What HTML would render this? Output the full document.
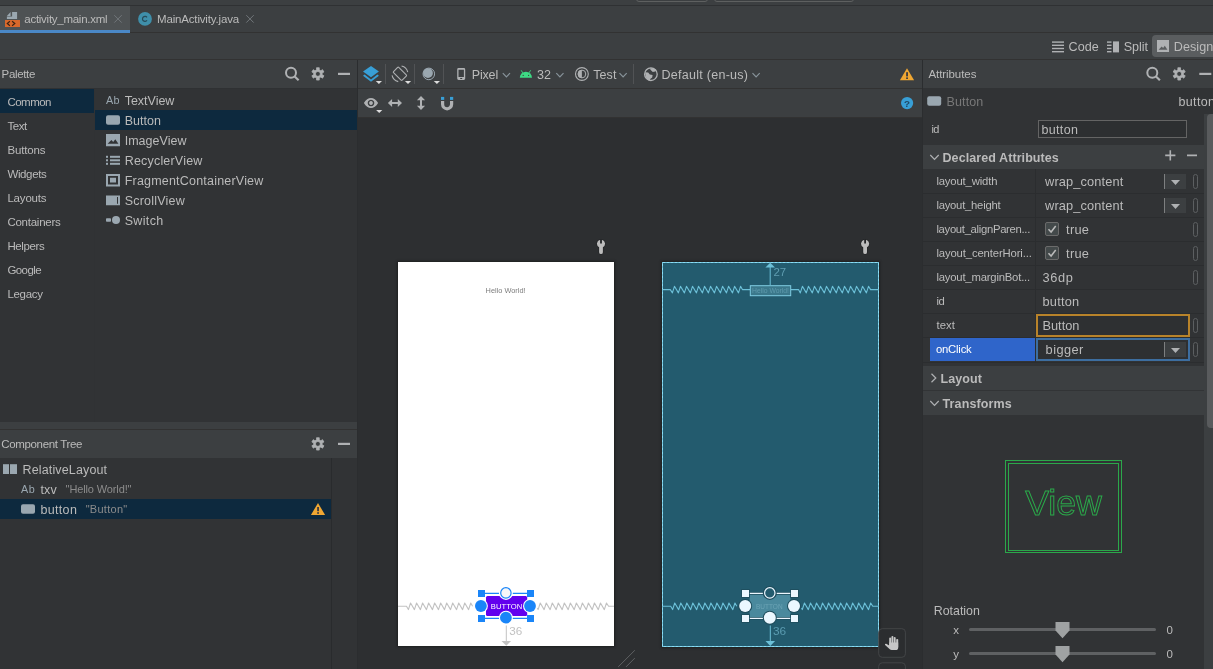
<!DOCTYPE html>
<html>
<head>
<meta charset="utf-8">
<title>Android Studio</title>
<style>
*{box-sizing:border-box;margin:0;padding:0}
html,body{width:1213px;height:669px;overflow:hidden;background:#3c3f41}
body{font-family:"Liberation Sans",sans-serif;font-size:12px;color:#bbbbbb;position:relative}
#root{position:absolute;left:0;top:0;width:1213px;height:669px;will-change:transform}
.a{position:absolute}
.t{position:absolute;white-space:nowrap;line-height:20px;height:20px}
svg{position:absolute;overflow:visible}
</style>
</head>
<body>
<div id="root">
<div class="a" style="left:0px;top:5px;width:1213px;height:1px;background:#2f3133;"></div>
<div class="a" style="left:636px;top:-6px;width:72px;height:8px;background:transparent;border:1px solid #5e6060;border-radius:3px"></div>
<div class="a" style="left:714px;top:-6px;width:140px;height:8px;background:transparent;border:1px solid #5e6060;border-radius:3px"></div>
<div class="a" style="left:0px;top:6px;width:130px;height:26px;background:#4e5254;"></div>
<div class="a" style="left:0px;top:30px;width:130px;height:3px;background:#4a88c7;"></div>
<div class="a" style="left:130px;top:32px;width:1083px;height:1px;background:#323232;"></div>
<div class="t" style="left:24.30px;top:9.00px;font-size:11.5px;color:#bbbbbb;letter-spacing:-0.268px;">activity_main.xml</div>
<div class="t" style="left:157.00px;top:9.00px;font-size:11.5px;color:#bbbbbb;letter-spacing:-0.164px;">MainActivity.java</div>
<div class="a" style="left:0px;top:59px;width:1213px;height:1px;background:#323232;"></div>
<div class="a" style="left:1152px;top:35px;width:70px;height:22px;background:#5a5d5f;border-radius:4px"></div>
<div class="t" style="left:1068.50px;top:37.00px;font-size:12.6px;color:#bbbbbb;letter-spacing:0.069px;">Code</div>
<div class="t" style="left:1123.70px;top:37.00px;font-size:12.6px;color:#bbbbbb;letter-spacing:-0.042px;">Split</div>
<div class="t" style="left:1173.80px;top:37.00px;font-size:12.6px;color:#bbbbbb;letter-spacing:0.046px;">Design</div>
<div class="a" style="left:0px;top:88px;width:357px;height:334px;background:#313335;"></div>
<div class="a" style="left:0px;top:88px;width:357px;height:1px;background:#2f3133;"></div>
<div class="t" style="left:1.60px;top:64.00px;font-size:11.5px;color:#bbbbbb;letter-spacing:-0.343px;">Palette</div>
<div class="a" style="left:0px;top:89px;width:94px;height:24px;background:#0d293e;"></div>
<div class="t" style="left:7.40px;top:92.00px;font-size:11.5px;color:#bbbbbb;letter-spacing:-0.509px;">Common</div>
<div class="t" style="left:7.40px;top:116.00px;font-size:11.5px;color:#bbbbbb;letter-spacing:-0.398px;">Text</div>
<div class="t" style="left:7.40px;top:140.00px;font-size:11.5px;color:#bbbbbb;letter-spacing:-0.157px;">Buttons</div>
<div class="t" style="left:7.40px;top:164.00px;font-size:11.5px;color:#bbbbbb;letter-spacing:-0.363px;">Widgets</div>
<div class="t" style="left:7.40px;top:188.00px;font-size:11.5px;color:#bbbbbb;letter-spacing:-0.183px;">Layouts</div>
<div class="t" style="left:7.40px;top:212.00px;font-size:11.5px;color:#bbbbbb;letter-spacing:-0.251px;">Containers</div>
<div class="t" style="left:7.40px;top:236.00px;font-size:11.5px;color:#bbbbbb;letter-spacing:-0.375px;">Helpers</div>
<div class="t" style="left:7.40px;top:260.00px;font-size:11.5px;color:#bbbbbb;letter-spacing:-0.581px;">Google</div>
<div class="t" style="left:7.40px;top:284.00px;font-size:11.5px;color:#bbbbbb;letter-spacing:-0.314px;">Legacy</div>
<div class="a" style="left:94px;top:89px;width:1px;height:333px;background:#303234;"></div>
<div class="a" style="left:95px;top:110px;width:262px;height:20px;background:#0d293e;"></div>
<div class="t" style="left:124.70px;top:91.00px;font-size:12.5px;color:#bbbbbb;letter-spacing:-0.012px;">TextView</div>
<div class="t" style="left:124.70px;top:111.00px;font-size:12.5px;color:#bbbbbb;letter-spacing:0.027px;">Button</div>
<div class="t" style="left:124.70px;top:131.00px;font-size:12.5px;color:#bbbbbb;letter-spacing:0.021px;">ImageView</div>
<div class="t" style="left:124.70px;top:151.00px;font-size:12.5px;color:#bbbbbb;letter-spacing:0.193px;">RecyclerView</div>
<div class="t" style="left:124.70px;top:171.00px;font-size:12.5px;color:#bbbbbb;letter-spacing:0.202px;">FragmentContainerView</div>
<div class="t" style="left:124.70px;top:191.00px;font-size:12.5px;color:#bbbbbb;letter-spacing:0.218px;">ScrollView</div>
<div class="t" style="left:124.70px;top:211.00px;font-size:12.5px;color:#bbbbbb;letter-spacing:0.347px;">Switch</div>
<div class="a" style="left:0px;top:429px;width:357px;height:1px;background:#323232;"></div>
<div class="a" style="left:0px;top:458px;width:357px;height:211px;background:#313335;"></div>
<div class="t" style="left:1.30px;top:434.00px;font-size:11.5px;color:#bbbbbb;letter-spacing:-0.354px;">Component Tree</div>
<div class="a" style="left:0px;top:499px;width:331px;height:20px;background:#0d293e;"></div>
<div class="a" style="left:331px;top:458px;width:1px;height:211px;background:#292b2d;"></div>
<div class="t" style="left:22.60px;top:460.00px;font-size:12.5px;color:#bbbbbb;letter-spacing:0.136px;">RelativeLayout</div>
<div class="t" style="left:40.40px;top:480.00px;font-size:12.5px;color:#bbbbbb;letter-spacing:0.176px;">txv</div>
<div class="t" style="left:65.60px;top:479.00px;font-size:11px;color:#8c8c8c;letter-spacing:-0.123px;">&quot;Hello World!&quot;</div>
<div class="t" style="left:40.40px;top:500.00px;font-size:12.5px;color:#bbbbbb;letter-spacing:0.341px;">button</div>
<div class="t" style="left:85.70px;top:499.00px;font-size:11px;color:#8c8c8c;letter-spacing:0.273px;">&quot;Button&quot;</div>
<div class="a" style="left:358px;top:88px;width:564px;height:1px;background:#323232;"></div>
<div class="a" style="left:358px;top:117px;width:564px;height:1px;background:#323232;"></div>
<div class="t" style="left:471.80px;top:65.00px;font-size:12.5px;color:#bbbbbb;letter-spacing:-0.179px;">Pixel</div>
<div class="t" style="left:537.00px;top:65.00px;font-size:12.5px;color:#bbbbbb;letter-spacing:0.048px;">32</div>
<div class="t" style="left:593.30px;top:65.00px;font-size:12.5px;color:#bbbbbb;letter-spacing:0.044px;">Test</div>
<div class="t" style="left:661.50px;top:65.00px;font-size:12.5px;color:#bbbbbb;letter-spacing:0.275px;">Default (en-us)</div>
<div class="a" style="left:385px;top:64px;width:1px;height:20px;background:#515355;"></div>
<div class="a" style="left:414px;top:64px;width:1px;height:20px;background:#515355;"></div>
<div class="a" style="left:443px;top:64px;width:1px;height:20px;background:#515355;"></div>
<div class="a" style="left:633px;top:64px;width:1px;height:20px;background:#515355;"></div>
<div class="a" style="left:358px;top:118px;width:564px;height:551px;background:#2d2f31;"></div>
<div class="a" style="left:398px;top:262px;width:216px;height:384px;background:#ffffff;box-shadow:0 0 2px 1px #1e1f20"></div>
<div class="a" style="left:662px;top:262px;width:217px;height:385px;background:#235b6e;box-shadow:0 0 2px 1px #1e1f20"></div>
<div class="a" style="left:923px;top:88px;width:281px;height:581px;background:#313335;"></div>
<div class="a" style="left:1204px;top:88px;width:9px;height:26px;background:#313335;"></div>
<div class="t" style="left:928.50px;top:64.00px;font-size:11.5px;color:#bbbbbb;letter-spacing:-0.078px;">Attributes</div>
<div class="t" style="left:946.60px;top:92.00px;font-size:12.5px;color:#787878;letter-spacing:0.093px;">Button</div>
<div class="t" style="left:1178.50px;top:92.00px;font-size:12.5px;color:#bbbbbb;letter-spacing:0.358px;">button</div>
<div class="t" style="left:931.40px;top:119.00px;font-size:11px;color:#bbbbbb;letter-spacing:-0.481px;">id</div>
<div class="a" style="left:1038px;top:120px;width:149px;height:18px;background:#2d2f31;border:1px solid #646464"></div>
<div class="t" style="left:1041.50px;top:120.00px;font-size:12.5px;color:#bbbbbb;letter-spacing:0.324px;">button</div>
<div class="a" style="left:923px;top:145px;width:281px;height:24px;background:#3c3f41;"></div>
<div class="t" style="left:942.50px;top:148.00px;font-size:12.5px;color:#bbbbbb;letter-spacing:0.082px;font-weight:bold;">Declared Attributes</div>
<div class="a" style="left:923px;top:193px;width:281px;height:1px;background:#2b2d2f;"></div>
<div class="t" style="left:936.40px;top:171.00px;font-size:11.3px;color:#bbbbbb;letter-spacing:-0.160px;">layout_width</div>
<div class="a" style="left:923px;top:217px;width:281px;height:1px;background:#2b2d2f;"></div>
<div class="t" style="left:936.40px;top:195.00px;font-size:11.3px;color:#bbbbbb;letter-spacing:-0.248px;">layout_height</div>
<div class="a" style="left:923px;top:241px;width:281px;height:1px;background:#2b2d2f;"></div>
<div class="t" style="left:936.40px;top:219.00px;font-size:11.3px;color:#bbbbbb;letter-spacing:-0.314px;">layout_alignParen...</div>
<div class="a" style="left:923px;top:265px;width:281px;height:1px;background:#2b2d2f;"></div>
<div class="t" style="left:936.40px;top:243.00px;font-size:11.3px;color:#bbbbbb;letter-spacing:-0.129px;">layout_centerHori...</div>
<div class="a" style="left:923px;top:289px;width:281px;height:1px;background:#2b2d2f;"></div>
<div class="t" style="left:936.40px;top:267.00px;font-size:11.3px;color:#bbbbbb;letter-spacing:-0.198px;">layout_marginBot...</div>
<div class="a" style="left:923px;top:313px;width:281px;height:1px;background:#2b2d2f;"></div>
<div class="t" style="left:936.40px;top:291.00px;font-size:11.3px;color:#bbbbbb;letter-spacing:-0.498px;">id</div>
<div class="a" style="left:923px;top:337px;width:281px;height:1px;background:#2b2d2f;"></div>
<div class="t" style="left:936.40px;top:315.00px;font-size:11.3px;color:#bbbbbb;letter-spacing:0.097px;">text</div>
<div class="a" style="left:1035px;top:169px;width:1px;height:193px;background:#2b2d2f;"></div>
<div class="a" style="left:930px;top:338px;width:105px;height:23px;background:#2f65ca;"></div>
<div class="t" style="left:936.00px;top:339.00px;font-size:11.3px;color:#ffffff;letter-spacing:-0.222px;">onClick</div>
<div class="a" style="left:923px;top:362px;width:281px;height:1px;background:#2b2d2f;"></div>
<div class="t" style="left:1045.10px;top:172.00px;font-size:12.8px;color:#bbbbbb;letter-spacing:0.121px;">wrap_content</div>
<div class="t" style="left:1045.10px;top:196.00px;font-size:12.8px;color:#bbbbbb;letter-spacing:0.121px;">wrap_content</div>
<div class="t" style="left:1066.10px;top:220.00px;font-size:12.8px;color:#bbbbbb;letter-spacing:0.236px;">true</div>
<div class="t" style="left:1066.10px;top:244.00px;font-size:12.8px;color:#bbbbbb;letter-spacing:0.236px;">true</div>
<div class="t" style="left:1042.50px;top:268.00px;font-size:12.8px;color:#bbbbbb;letter-spacing:0.606px;">36dp</div>
<div class="t" style="left:1042.50px;top:292.00px;font-size:12.8px;color:#bbbbbb;letter-spacing:0.219px;">button</div>
<div class="a" style="left:1036px;top:314px;width:154px;height:23px;background:#2e3032;border:2px solid #b8832a"></div>
<div class="t" style="left:1042.50px;top:316.00px;font-size:12.8px;color:#bbbbbb;letter-spacing:-0.018px;">Button</div>
<div class="a" style="left:1036px;top:338px;width:154px;height:23px;background:#2e3032;border:2px solid #3d6ea0"></div>
<div class="t" style="left:1045.60px;top:340.00px;font-size:12.8px;color:#bbbbbb;letter-spacing:0.436px;">bigger</div>
<div class="a" style="left:1164px;top:174px;width:22px;height:15px;background:#3c3f41;"></div>
<div class="a" style="left:1164px;top:174px;width:1px;height:15px;background:#7d7f80;"></div>
<svg style="left:1171px;top:180px" width="9" height="5" viewBox="0 0 9 5"><path d="M0 0h9l-4.5 5z" fill="#afb1b3"/></svg>
<div class="a" style="left:1164px;top:198px;width:22px;height:15px;background:#3c3f41;"></div>
<div class="a" style="left:1164px;top:198px;width:1px;height:15px;background:#7d7f80;"></div>
<svg style="left:1171px;top:204px" width="9" height="5" viewBox="0 0 9 5"><path d="M0 0h9l-4.5 5z" fill="#afb1b3"/></svg>
<div class="a" style="left:1164px;top:342px;width:22px;height:15px;background:#3c3f41;"></div>
<div class="a" style="left:1164px;top:342px;width:1px;height:15px;background:#7d7f80;"></div>
<svg style="left:1171px;top:348px" width="9" height="5" viewBox="0 0 9 5"><path d="M0 0h9l-4.5 5z" fill="#afb1b3"/></svg>
<div class="a" style="left:1193px;top:174px;width:5px;height:15px;background:transparent;border:1px solid #5c5f61;border-radius:2.5px"></div>
<div class="a" style="left:1193px;top:198px;width:5px;height:15px;background:transparent;border:1px solid #5c5f61;border-radius:2.5px"></div>
<div class="a" style="left:1193px;top:222px;width:5px;height:15px;background:transparent;border:1px solid #5c5f61;border-radius:2.5px"></div>
<div class="a" style="left:1193px;top:246px;width:5px;height:15px;background:transparent;border:1px solid #5c5f61;border-radius:2.5px"></div>
<div class="a" style="left:1193px;top:270px;width:5px;height:15px;background:transparent;border:1px solid #5c5f61;border-radius:2.5px"></div>
<div class="a" style="left:1193px;top:318px;width:5px;height:15px;background:transparent;border:1px solid #5c5f61;border-radius:2.5px"></div>
<div class="a" style="left:1193px;top:342px;width:5px;height:15px;background:transparent;border:1px solid #5c5f61;border-radius:2.5px"></div>
<div class="a" style="left:1045px;top:222px;width:14px;height:14px;background:#43494a;border:1px solid #6b6b6b;border-radius:2px"></div>
<svg style="left:1045px;top:222px" width="14" height="14" viewBox="0 0 14 14"><path d="M3.5 7.2l2.6 2.8l4.6-6" fill="none" stroke="#bbbbbb" stroke-width="1.5"/></svg>
<div class="a" style="left:1045px;top:246px;width:14px;height:14px;background:#43494a;border:1px solid #6b6b6b;border-radius:2px"></div>
<svg style="left:1045px;top:246px" width="14" height="14" viewBox="0 0 14 14"><path d="M3.5 7.2l2.6 2.8l4.6-6" fill="none" stroke="#bbbbbb" stroke-width="1.5"/></svg>
<div class="a" style="left:923px;top:366px;width:281px;height:24px;background:#3c3f41;"></div>
<div class="a" style="left:923px;top:390px;width:281px;height:1px;background:#323436;"></div>
<div class="a" style="left:923px;top:391px;width:281px;height:24px;background:#3c3f41;"></div>
<div class="t" style="left:940.50px;top:369.00px;font-size:12.5px;color:#bbbbbb;letter-spacing:0.104px;font-weight:bold;">Layout</div>
<div class="t" style="left:942.50px;top:394.00px;font-size:12.5px;color:#bbbbbb;letter-spacing:0.122px;font-weight:bold;">Transforms</div>
<div class="a" style="left:1206.5px;top:114px;width:8px;height:314px;background:#595b5d;border-radius:4px 0 0 4px"></div>
<div class="a" style="left:1005px;top:460px;width:117px;height:93px;background:transparent;border:1px solid #2ba84a"></div>
<div class="a" style="left:1008px;top:462.5px;width:111px;height:88px;background:transparent;border:1px solid #2ba84a"></div>
<svg style="left:1005px;top:460px" width="117" height="93" viewBox="0 0 117 93"><text x="20.2" y="55" font-family="Liberation Sans, sans-serif" font-size="35.7" fill="none" stroke="#2ba84a" stroke-width="1">View</text></svg>
<div class="t" style="left:933.80px;top:601.00px;font-size:12.4px;color:#bbbbbb;letter-spacing:-0.011px;">Rotation</div>
<div class="t" style="left:953.30px;top:620.00px;font-size:11.5px;color:#bbbbbb;letter-spacing:0.000px;">x</div>
<div class="t" style="left:1166.40px;top:620.00px;font-size:11.5px;color:#bbbbbb;letter-spacing:0.000px;">0</div>
<div class="a" style="left:969px;top:628.2px;width:187.2px;height:3px;background:#5f6163;border-radius:1.5px"></div>
<svg style="left:1055.3px;top:622.1px" width="15" height="17" viewBox="0 0 15 17"><path d="M0.5 0h14v8.5l-7 7.7l-7-7.7z" fill="#9fa2a3"/></svg>
<div class="t" style="left:953.30px;top:644.00px;font-size:11.5px;color:#bbbbbb;letter-spacing:0.000px;">y</div>
<div class="t" style="left:1166.40px;top:644.00px;font-size:11.5px;color:#bbbbbb;letter-spacing:0.000px;">0</div>
<div class="a" style="left:969px;top:652.2px;width:187.2px;height:3px;background:#5f6163;border-radius:1.5px"></div>
<svg style="left:1055.3px;top:646.1px" width="15" height="17" viewBox="0 0 15 17"><path d="M0.5 0h14v8.5l-7 7.7l-7-7.7z" fill="#9fa2a3"/></svg>
<div class="a" style="left:357px;top:60px;width:1px;height:609px;background:#2b2d2f;"></div>
<div class="a" style="left:922px;top:60px;width:1px;height:609px;background:#2b2d2f;"></div>
<svg style="left:0;top:0" width="1213" height="669" viewBox="0 0 1213 669"><rect x="5" y="20" width="15" height="7" fill="#d9682b"/><path d="M9.9 21.3L7.3 23.5L9.9 25.7M12.1 21.3L14.8 23.5L12.1 25.7" fill="none" stroke="#3a2213" stroke-width="1.2"/><path d="M12.1 11.9h5v7h-10.2v-2.3h5.2z M6.9 15.9L10.6 11.9V15.9z" fill="#9aa7b0"/><path d="M114.3 15.2l7.4 7.4M121.7 15.2l-7.4 7.4" stroke="#71767a" stroke-width="1" fill="none"/><path d="M246.3 15.2l7.4 7.4M253.7 15.2l-7.4 7.4" stroke="#71767a" stroke-width="1" fill="none"/><circle cx="145" cy="18.9" r="6.9" fill="#3f8faa"/><path d="M147 17.4A2.5 2.5 0 1 0 147 20.400" fill="none" stroke="#274a58" stroke-width="1.200"/><rect x="1052" y="41.4" width="12" height="1.4" fill="#afb1b3"/><rect x="1107" y="41.4" width="4.5" height="1.4" fill="#afb1b3"/><rect x="1052" y="44.6" width="12" height="1.4" fill="#afb1b3"/><rect x="1107" y="44.6" width="4.5" height="1.4" fill="#afb1b3"/><rect x="1052" y="47.8" width="12" height="1.4" fill="#afb1b3"/><rect x="1107" y="47.8" width="4.5" height="1.4" fill="#afb1b3"/><rect x="1052" y="51.0" width="12" height="1.4" fill="#afb1b3"/><rect x="1107" y="51.0" width="4.5" height="1.4" fill="#afb1b3"/><rect x="1113" y="41.4" width="6" height="11" fill="#afb1b3"/><path d="M1157 40h12v12h-12z M1158.6 49.8h8.8l-2.6-4l-1.7 2.3l-1.4-1.6z" fill="#afb1b3" fill-rule="evenodd"/><circle cx="291" cy="72.8" r="5" fill="none" stroke="#afb1b3" stroke-width="2"/><path d="M294.4 76.3L298.6 80.3" stroke="#afb1b3" stroke-width="2.2" fill="none"/><path d="M316.64 69.79 L316.53 67.75 L319.27 67.75 L319.16 69.79 L320.83 70.75 L322.54 69.64 L323.91 72.02 L322.09 72.93 L322.09 74.87 L323.91 75.78 L322.54 78.16 L320.83 77.05 L319.16 78.01 L319.27 80.05 L316.53 80.05 L316.64 78.01 L314.97 77.05 L313.26 78.16 L311.89 75.78 L313.71 74.87 L313.71 72.93 L311.89 72.02 L313.26 69.64 L314.97 70.75Z M315.45 73.90a2.45 2.45 0 1 0 4.9 0a2.45 2.45 0 1 0 -4.9 0Z" fill="#afb1b3" fill-rule="evenodd" stroke="#afb1b3" stroke-width="0.8" stroke-linejoin="round"/><rect x="338" y="72.8" width="12" height="2.2" fill="#afb1b3"/><circle cx="1152.3" cy="72.8" r="5" fill="none" stroke="#afb1b3" stroke-width="2"/><path d="M1155.6999999999998 76.3L1159.9 80.3" stroke="#afb1b3" stroke-width="2.2" fill="none"/><path d="M1177.94 69.79 L1177.83 67.75 L1180.57 67.75 L1180.46 69.79 L1182.13 70.75 L1183.84 69.64 L1185.21 72.02 L1183.39 72.93 L1183.39 74.87 L1185.21 75.78 L1183.84 78.16 L1182.13 77.05 L1180.46 78.01 L1180.57 80.05 L1177.83 80.05 L1177.94 78.01 L1176.27 77.05 L1174.56 78.16 L1173.19 75.78 L1175.01 74.87 L1175.01 72.93 L1173.19 72.02 L1174.56 69.64 L1176.27 70.75Z M1176.75 73.90a2.45 2.45 0 1 0 4.9 0a2.45 2.45 0 1 0 -4.9 0Z" fill="#afb1b3" fill-rule="evenodd" stroke="#afb1b3" stroke-width="0.8" stroke-linejoin="round"/><rect x="1199.3" y="72.8" width="12" height="2.2" fill="#afb1b3"/><path d="M316.64 439.79 L316.53 437.75 L319.27 437.75 L319.16 439.79 L320.83 440.75 L322.54 439.64 L323.91 442.02 L322.09 442.93 L322.09 444.87 L323.91 445.78 L322.54 448.16 L320.83 447.05 L319.16 448.01 L319.27 450.05 L316.53 450.05 L316.64 448.01 L314.97 447.05 L313.26 448.16 L311.89 445.78 L313.71 444.87 L313.71 442.93 L311.89 442.02 L313.26 439.64 L314.97 440.75Z M315.45 443.90a2.45 2.45 0 1 0 4.9 0a2.45 2.45 0 1 0 -4.9 0Z" fill="#afb1b3" fill-rule="evenodd" stroke="#afb1b3" stroke-width="0.8" stroke-linejoin="round"/><rect x="338" y="442.8" width="12" height="2.2" fill="#afb1b3"/><rect x="106" y="115.2" width="14" height="9.6" rx="2" fill="#9aa7b0"/><path d="M106 134h14v12.2h-14z M107.6 143.8h10.8l-3.1-4.6l-2.1 2.7l-1.8-1.9z" fill="#9aa7b0" fill-rule="evenodd"/><rect x="106" y="155.8" width="2" height="2" fill="#9aa7b0"/><rect x="110" y="155.8" width="10" height="2" fill="#9aa7b0"/><rect x="106" y="159.3" width="2" height="2" fill="#9aa7b0"/><rect x="110" y="159.3" width="10" height="2" fill="#9aa7b0"/><rect x="106" y="162.8" width="2" height="2" fill="#9aa7b0"/><rect x="110" y="162.8" width="10" height="2" fill="#9aa7b0"/><path d="M106 174h14v12.4h-14z M108 176h10v8.4h-10z M110 177.8h6v4.8h-6z" fill="#9aa7b0" fill-rule="evenodd"/><path d="M106 195.5h14v9.8h-14z M117 197h1v6.8h-1z" fill="#9aa7b0" fill-rule="evenodd"/><rect x="106" y="218.2" width="5" height="3.6" rx="0.8" fill="#9aa7b0"/><circle cx="116" cy="220" r="4" fill="#9aa7b0"/><rect x="3" y="464.2" width="6" height="9.8" fill="#9aa7b0"/><rect x="10" y="464.2" width="7" height="9.8" fill="#9aa7b0"/><rect x="21" y="504.2" width="14" height="9.6" rx="2" fill="#9aa7b0"/><path d="M318 503L325.1 515H310.9z" fill="#f0a732"/><rect x="317.2" y="507" width="1.7" height="4.2" fill="#2d3240"/><rect x="317.2" y="512.2" width="1.7" height="1.6" fill="#2d3240"/><path d="M907 68.2L914.1 80.2H899.9z" fill="#f0a732"/><rect x="906.2" y="72.2" width="1.7" height="4.2" fill="#2d3240"/><rect x="906.2" y="77.4" width="1.7" height="1.6" fill="#2d3240"/><circle cx="907.1" cy="103.1" r="6.1" fill="#389fd6"/><text x="907.1" y="106.6" font-family="Liberation Sans, sans-serif" font-weight="bold" font-size="9.8" text-anchor="middle" fill="#1f4a66">?</text><rect x="927.2" y="96.2" width="14" height="9.6" rx="2" fill="#9aa7b0"/><path d="M930.3 155l4.2 4.4l4.2-4.4" fill="none" stroke="#afb1b3" stroke-width="1.2"/><path d="M930.3 401l4.2 4.4l4.2-4.4" fill="none" stroke="#afb1b3" stroke-width="1.2"/><path d="M931.5 373.8l4.3 4.2l-4.3 4.2" fill="none" stroke="#afb1b3" stroke-width="1.2"/><path d="M1165.2 155.4h10.2M1170.3 150.3v10.2M1187 155.4h10" stroke="#afb1b3" stroke-width="1.6" fill="none"/></svg>
<div class="t" style="left:105.90px;top:90.00px;font-size:10.8px;color:#9aa7b0;letter-spacing:0.495px;">Ab</div>
<div class="t" style="left:21.00px;top:479.00px;font-size:10.8px;color:#9aa7b0;letter-spacing:0.495px;">Ab</div>
<svg style="left:0;top:0" width="1213" height="669" viewBox="0 0 1213 669"><path d="M371 65.9L378.9 71.6L371 77.2L363 71.6z" fill="#389fd6"/><path d="M363 75.7L364.6 74.6L371 79.4L377.4 74.6L378.9 75.7L371 81.7z" fill="#389fd6"/><path d="M375.8 81.1h6.2l-3.1 3z" fill="#dcdcdc"/><path d="M404.9 81.1h6.2l-3.1 3z" fill="#dcdcdc"/><path d="M433.8 81.1h6.2l-3.1 3z" fill="#dcdcdc"/><path d="M376.1 109.9h6.2l-3.1 3z" fill="#dcdcdc"/><g transform="translate(399.9 73.8) rotate(45)"><rect x="-6.1" y="-3.7" width="12.2" height="7.4" rx="0.8" fill="none" stroke="#afb1b3" stroke-width="1.1"/></g><path d="M401.56 65.97A8.0 8.0 0 0 1 407.73 72.14" fill="none" stroke="#afb1b3" stroke-width="1.1"/><path d="M398.24 81.63A8.0 8.0 0 0 1 392.07 75.46" fill="none" stroke="#afb1b3" stroke-width="1.1"/><circle cx="428.8" cy="73.9" r="5.8" fill="none" stroke="#9aa7b0" stroke-width="1"/><circle cx="427.950" cy="73.050" r="4.900" fill="#9aa7b0"/><path d="M458.6 68h5.2a1.4 1.4 0 0 1 1.4 1.4v9.2a1.4 1.4 0 0 1 -1.4 1.4h-5.2a1.4 1.4 0 0 1 -1.4 -1.4v-9.2a1.4 1.4 0 0 1 1.4 -1.4z M458.5 69.8v7.2h5.4v-7.2z M460.2 78h2v0.9h-2z" fill="#afb1b3" fill-rule="evenodd"/><path d="M502.8 73.2l3.6 3.6l3.6-3.6" fill="none" stroke="#87939a" stroke-width="1.2"/><path d="M556.3 73.2l3.6 3.6l3.6-3.6" fill="none" stroke="#87939a" stroke-width="1.2"/><path d="M619.5 73.2l3.6 3.6l3.6-3.6" fill="none" stroke="#87939a" stroke-width="1.2"/><path d="M752.5 73.2l3.6 3.6l3.6-3.6" fill="none" stroke="#87939a" stroke-width="1.2"/><path d="M519.8 77.8a6.1 6.1 0 0 1 12.2 0z" fill="#3ddc84"/><path d="M521.2 70.3l1.6 2.6M530.6 70.3l-1.6 2.6" stroke="#3ddc84" stroke-width="0.9" fill="none"/><circle cx="523.2" cy="75.4" r="0.6" fill="#3c3f41"/><circle cx="528.6" cy="75.4" r="0.6" fill="#3c3f41"/><circle cx="581.9" cy="74" r="6.4" fill="none" stroke="#afb1b3" stroke-width="1.1"/><circle cx="581.9" cy="74" r="3.9" fill="none" stroke="#afb1b3" stroke-width="1"/><path d="M581.9 70.1a3.9 3.9 0 0 0 0 7.8z" fill="#afb1b3"/><circle cx="650.9" cy="74.2" r="6.3" fill="none" stroke="#afb1b3" stroke-width="1.3"/><path d="M645 72.2l3.2 0.4l1.6 2l2.8 0.4l-0.4 2.4l-2 1.6l-0.4 2l-2.4-1.2l-1.6-2.8z M649.6 68.4l3.6-0.4l3.2 2l-1.2 1.6l-2.4 0.4l-1.6-1.4z" fill="#afb1b3"/><path d="M363.9 103c2-3.3 4.4-5 7.1-5s5.1 1.7 7.1 5c-2 3.3-4.4 5-7.1 5s-5.100-1.700-7.1-5z M371 99.700a3.300 3.300 0 1 0 0.010 0z M371 101.100a1.900 1.900 0 1 1 -0.010 0z" fill="#afb1b3" fill-rule="evenodd"/><path d="M387.9 103l4.2-4.1v3.100h5.700v-3.100l4.200 4.100l-4.200 4.100v-3.100h-5.700v3.100z" fill="#afb1b3"/><path d="M421 96l4.100 4.200h-3.100v5.600h3.100l-4.100 4.200l-4.100-4.200h3.100v-5.600h-3.100z" fill="#afb1b3"/><rect x="441" y="96.900" width="3.200" height="3" fill="#389fd6"/><rect x="450" y="96.900" width="3.200" height="3" fill="#389fd6"/><path d="M442.600 101v3.300a4.500 4.500 0 0 0 9 0v-3.300" fill="none" stroke="#afb1b3" stroke-width="3.200"/><circle cx="601" cy="243.700" r="4.700" fill="#232527"/><rect x="598.5" y="244" width="5" height="10.700" rx="2.400" fill="#232527"/><path d="M600.1 239.700A4.100 4.100 0 0 0 599.1 247.300V252.200a1.900 1.900 0 0 0 3.800 0V247.300A4.100 4.100 0 0 0 601.9 239.700V243.600H600.1z" fill="#bcbcbc"/><circle cx="865.1" cy="243.700" r="4.700" fill="#232527"/><rect x="862.6" y="244" width="5" height="10.700" rx="2.400" fill="#232527"/><path d="M864.2 239.700A4.100 4.100 0 0 0 863.2 247.300V252.200a1.900 1.900 0 0 0 3.800 0V247.300A4.100 4.100 0 0 0 866.0 239.700V243.600H864.2z" fill="#bcbcbc"/><path d="M618.200 666.900L634.800 650.300M626 666.900L634.800 658.100" stroke="#5e6062" stroke-width="1" fill="none"/></svg>
<svg style="left:0;top:0" width="1213" height="669" viewBox="0 0 1213 669"><text x="485.6" y="293.2" font-family="Liberation Sans, sans-serif" font-size="7.6" fill="#7c7c7c" textLength="40" lengthAdjust="spacingAndGlyphs">Hello World!</text><path d="M398.00 606.30L406.50 606.30L408.40 609.60L410.55 603.00L414.42 609.60L416.57 603.00L420.44 609.60L422.59 603.00L426.46 609.60L428.61 603.00L432.48 609.60L434.63 603.00L438.50 609.60L440.65 603.00L444.52 609.60L446.67 603.00L450.54 609.60L452.69 603.00L456.56 609.60L458.71 603.00L462.58 609.60L464.73 603.00L468.60 609.60L470.75 603.00L472.60 606.30" fill="none" stroke="#c2c2c2" stroke-width="1.1" stroke-linejoin="round"/><path d="M537.40 607.95L538.10 609.60L540.25 603.00L544.12 609.60L546.27 603.00L550.14 609.60L552.29 603.00L556.16 609.60L558.31 603.00L562.18 609.60L564.33 603.00L568.20 609.60L570.35 603.00L574.22 609.60L576.37 603.00L580.24 609.60L582.39 603.00L586.26 609.60L588.41 603.00L592.28 609.60L594.43 603.00L598.30 609.60L600.45 603.00L604.32 609.60L606.47 603.00L608.60 606.30L614.00 606.30" fill="none" stroke="#c2c2c2" stroke-width="1.1" stroke-linejoin="round"/><path d="M506.300 625.500V641" stroke="#c2c2c2" stroke-width="1" fill="none"/><path d="M501.500 641h9.600l-4.800 4.800z" fill="#c2c2c2"/><text x="509.300" y="634.500" font-family="Liberation Sans, sans-serif" font-size="10.800" fill="#c2c2c2" textLength="13" lengthAdjust="spacingAndGlyphs">36</text><rect x="486" y="596.100" width="41.200" height="19.800" rx="1.500" fill="#6200ee"/><text x="490.800" y="609" font-family="Liberation Sans, sans-serif" font-size="7.600" fill="#ffffff" textLength="31.500" lengthAdjust="spacing">BUTTON</text><path d="M481.500 593.400H530.500M481.500 618.400H530.500" stroke="#ffffff" stroke-width="2.600" fill="none"/><path d="M481.500 593.400H530.500M481.500 618.400H530.500" stroke="#1a85f8" stroke-width="1.200" fill="none"/><rect x="478" y="590" width="7" height="7" fill="#1a85f8"/><rect x="527" y="590" width="7" height="7" fill="#1a85f8"/><rect x="478" y="615" width="7" height="7" fill="#1a85f8"/><rect x="527" y="615" width="7" height="7" fill="#1a85f8"/><circle cx="480.9" cy="606" r="7" fill="#ffffff"/><circle cx="480.9" cy="606" r="5.900" fill="#1a85f8"/><circle cx="530" cy="606" r="7" fill="#ffffff"/><circle cx="530" cy="606" r="5.900" fill="#1a85f8"/><circle cx="505.9" cy="617.7" r="7" fill="#ffffff"/><circle cx="505.9" cy="617.7" r="5.900" fill="#1a85f8"/><circle cx="505.900" cy="592.900" r="7" fill="#ffffff"/><circle cx="505.900" cy="592.900" r="5.200" fill="#f8f8f8" stroke="#1a85f8" stroke-width="1.200"/><rect x="662.500" y="262.500" width="216" height="384" fill="none" stroke="#62b3ca" stroke-width="1"/><rect x="662.500" y="262.500" width="216" height="384" fill="none" stroke="#8adcf5" stroke-width="1" stroke-dasharray="3 1"/><path d="M662.50 289.60L670.30 289.60L672.40 292.90L674.45 286.30L678.41 292.90L680.46 286.30L684.42 292.90L686.47 286.30L690.43 292.90L692.48 286.30L696.44 292.90L698.49 286.30L702.45 292.90L704.50 286.30L708.46 292.90L710.51 286.30L714.47 292.90L716.52 286.30L720.48 292.90L722.53 286.30L726.49 292.90L728.54 286.30L732.50 292.90L734.55 286.30L738.51 292.90L740.56 286.30L742.40 289.60L750.00 289.60" fill="none" stroke="#6cc0d8" stroke-width="1.1" stroke-linejoin="round"/><path d="M791.00 289.60L798.50 289.60L800.30 292.90L802.40 286.30L806.31 292.90L808.41 286.30L812.32 292.90L814.42 286.30L818.33 292.90L820.43 286.30L824.34 292.90L826.44 286.30L830.35 292.90L832.45 286.30L836.36 292.90L838.46 286.30L842.37 292.90L844.47 286.30L848.38 292.90L850.48 286.30L854.39 292.90L856.49 286.30L860.40 292.90L862.50 286.30L866.41 292.90L868.51 286.30L870.60 289.60L878.50 289.60" fill="none" stroke="#6cc0d8" stroke-width="1.1" stroke-linejoin="round"/><rect x="750.300" y="285.700" width="40.400" height="10" fill="#3b788b" stroke="#7fcce2" stroke-width="1"/><text x="752" y="293.200" font-family="Liberation Sans, sans-serif" font-size="7" fill="#5f9aad" textLength="37" lengthAdjust="spacingAndGlyphs">Hello World!</text><path d="M770.200 267V285.200" stroke="#6cc0d8" stroke-width="1" fill="none"/><path d="M765.400 267.600h9.600l-4.800-4.800z" fill="#6cc0d8"/><text x="773.500" y="275.800" font-family="Liberation Sans, sans-serif" font-size="11.200" fill="#5f9db1" textLength="12.700" lengthAdjust="spacingAndGlyphs">27</text><path d="M662.50 606.30L670.70 606.30L672.60 609.60L674.75 603.00L678.62 609.60L680.77 603.00L684.64 609.60L686.79 603.00L690.66 609.60L692.81 603.00L696.68 609.60L698.83 603.00L702.70 609.60L704.85 603.00L708.72 609.60L710.87 603.00L714.74 609.60L716.89 603.00L720.76 609.60L722.91 603.00L726.78 609.60L728.93 603.00L732.80 609.60L734.95 603.00L736.80 606.30" fill="none" stroke="#6cc0d8" stroke-width="1.1" stroke-linejoin="round"/><path d="M801.60 607.95L802.30 609.60L804.45 603.00L808.32 609.60L810.47 603.00L814.34 609.60L816.49 603.00L820.36 609.60L822.51 603.00L826.38 609.60L828.53 603.00L832.40 609.60L834.55 603.00L838.42 609.60L840.57 603.00L844.44 609.60L846.59 603.00L850.46 609.60L852.61 603.00L856.48 609.60L858.63 603.00L862.50 609.60L864.65 603.00L868.52 609.60L870.67 603.00L872.80 606.30L878.50 606.30" fill="none" stroke="#6cc0d8" stroke-width="1.1" stroke-linejoin="round"/><path d="M770.300 625.500V641" stroke="#6cc0d8" stroke-width="1" fill="none"/><path d="M765.500 641h9.600l-4.800 4.900z" fill="#6cc0d8"/><text x="773" y="634.500" font-family="Liberation Sans, sans-serif" font-size="10.800" fill="#5a9bb0" textLength="13.200" lengthAdjust="spacingAndGlyphs">36</text><rect x="749.700" y="594" width="40.700" height="24" fill="#4a899d"/><text x="756" y="609" font-family="Liberation Sans, sans-serif" font-size="7.400" fill="#6ba3b5" textLength="26.600" lengthAdjust="spacingAndGlyphs">BUTTON</text><path d="M745.500 593.400H794.600M745.500 618.400H794.600" stroke="#1e4c5c" stroke-width="2.600" fill="none"/><path d="M745.500 593.400H794.600M745.500 618.400H794.600" stroke="#ebf7ff" stroke-width="1.100" fill="none"/><rect x="741.2" y="589.2" width="8.600" height="8.600" fill="#1e4c5c"/><rect x="742" y="590" width="7" height="7" fill="#ebf7ff"/><rect x="790.2" y="589.2" width="8.600" height="8.600" fill="#1e4c5c"/><rect x="791" y="590" width="7" height="7" fill="#ebf7ff"/><rect x="741.2" y="614.2" width="8.600" height="8.600" fill="#1e4c5c"/><rect x="742" y="615" width="7" height="7" fill="#ebf7ff"/><rect x="790.2" y="614.2" width="8.600" height="8.600" fill="#1e4c5c"/><rect x="791" y="615" width="7" height="7" fill="#ebf7ff"/><circle cx="745.2" cy="606" r="7" fill="#1e4c5c"/><circle cx="745.2" cy="606" r="6" fill="#ebf7ff"/><circle cx="794" cy="606" r="7" fill="#1e4c5c"/><circle cx="794" cy="606" r="6" fill="#ebf7ff"/><circle cx="769.8" cy="617.7" r="7" fill="#1e4c5c"/><circle cx="769.8" cy="617.7" r="6" fill="#ebf7ff"/><circle cx="769.800" cy="592.900" r="7" fill="#1e4c5c"/><circle cx="769.800" cy="592.900" r="5.200" fill="#235b6e" stroke="#ebf7ff" stroke-width="1.200"/><rect x="878.700" y="628.700" width="26.700" height="28.600" rx="3.500" fill="#2b2d2f" stroke="#434547" stroke-width="1"/><rect x="878.700" y="662.800" width="26.700" height="28.600" rx="3.500" fill="#2b2d2f" stroke="#434547" stroke-width="1"/><rect x="889.2" y="637.6" width="1.9" height="9" rx="0.900" fill="#c6c6c6"/><rect x="891.45" y="636" width="1.95" height="9" rx="0.900" fill="#c6c6c6"/><rect x="893.8" y="637" width="1.85" height="9" rx="0.900" fill="#c6c6c6"/><rect x="896.2" y="638.9" width="2" height="9" rx="0.900" fill="#c6c6c6"/><path d="M889.200 642.500H898.200V647.500a2.600 2.600 0 0 1 -2.600 2.600H891.600a2.600 2.600 0 0 1 -1.800 -0.800L885.100 645.100a0.900 0.900 0 0 1 1.100 -1.300L889.200 645.600z" fill="#c6c6c6"/></svg>
</div>
</body>
</html>
